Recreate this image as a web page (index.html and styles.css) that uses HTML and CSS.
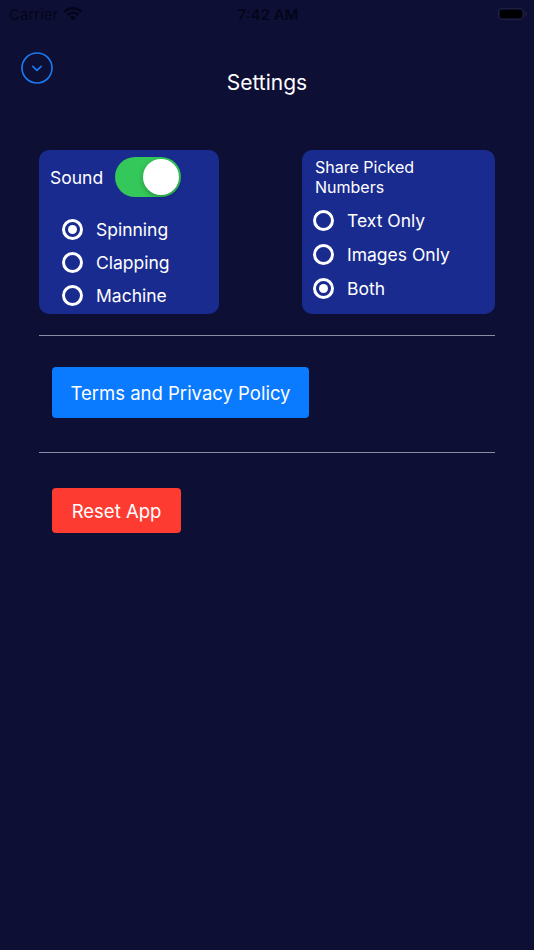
FILE: index.html
```html
<!DOCTYPE html>
<html>
<head>
	<title>Settings</title>
	<link rel="stylesheet" href="styles.css">
</head>
<body>
	<div class="statusBar">
		<div class="carrier">
			<span>Carrier</span>
			<svg class="wifi" width="20" height="14" viewBox="0 0 20 14">
				<path d="M10 13.5 L6.9 10.2 A4.4 4.4 0 0 1 13.1 10.2 Z" fill="#04051a"/>
				<path d="M4.6 7.8 A7.7 7.7 0 0 1 15.4 7.8" stroke="#04051a" stroke-width="2.4" fill="none"/>
				<path d="M1.6 4.8 A11.8 11.8 0 0 1 18.4 4.8" stroke="#04051a" stroke-width="2.4" fill="none"/>
			</svg>
		</div>
		<div class="clock">7:42 AM</div>
		<div class="battery">
			<span class="batteryBody"><span class="batteryFill"></span></span>
			<span class="batteryTip"></span>
		</div>
	</div>

	<div class="header">
		<button class="closeBtn">
			<svg width="32" height="32" viewBox="0 0 32 32">
				<circle cx="16" cy="16" r="15" stroke="#1b7bf2" stroke-width="1.6" fill="none"/>
				<path d="M11.8 14.3 L16 18.3 L20.2 14.3" stroke="#1b7bf2" stroke-width="1.6" fill="none" stroke-linecap="round" stroke-linejoin="round"/>
			</svg>
		</button>
		<h1>Settings</h1>
		<div></div>
	</div>

	<div class="panels">
		<div class="card soundCard">
			<div class="soundRow">
				<span>Sound</span>
				<span class="toggle"><span class="knob"></span></span>
			</div>
			<div class="options">
				<div class="option"><span class="radio checked"></span>Spinning</div>
				<div class="option"><span class="radio"></span>Clapping</div>
				<div class="option"><span class="radio"></span>Machine</div>
			</div>
		</div>

		<div class="card shareCard">
			<div class="cardTitle">Share Picked<br>Numbers</div>
			<div class="options">
				<div class="option"><span class="radio"></span>Text Only</div>
				<div class="option"><span class="radio"></span>Images Only</div>
				<div class="option"><span class="radio checked"></span>Both</div>
			</div>
		</div>
	</div>

	<div class="divider"></div>

	<div class="actions">
		<button class="btn btnBlue">Terms and Privacy Policy</button>
	</div>

	<div class="divider"></div>

	<div class="actions">
		<button class="btn btnRed">Reset App</button>
	</div>
</body>
</html>
```

FILE: styles.css
```css
body {
	margin: 0;
	width: 534px;
	height: 950px;
	background-color: #0e0f35;
	font-family: Inter, "Noto Sans", sans-serif;
	color: #ffffff;
	overflow: hidden;
}

.statusBar {
	height: 28px;
	display: grid;
	grid-template-columns: 1fr auto 1fr;
	align-items: center;
	padding: 0 7px 0 9px;
	color: #04051a;
	font-size: 15px;
}
.carrier {
	display: flex;
	align-items: center;
	gap: 5px;
}
.clock {
	font-weight: 600;
	font-size: 15px;
}
.battery {
	display: flex;
	align-items: center;
	justify-content: flex-end;
}
.batteryBody {
	width: 26px;
	height: 12px;
	border: 1px solid #1d1e3a;
	border-radius: 3px;
	padding: 1px;
	box-sizing: border-box;
	display: flex;
}
.batteryFill {
	flex: 1;
	background-color: #000000;
	border-radius: 2px;
}
.batteryTip {
	width: 2px;
	height: 4px;
	background-color: #1d1e3a;
	margin-left: 1px;
	border-radius: 0 1px 1px 0;
}

.header {
	margin-top: 24px;
	display: grid;
	grid-template-columns: 1fr auto 1fr;
	height: 42px;
	padding-left: 21px;
	padding-right: 21px;
}
.closeBtn {
	width: 32px;
	height: 32px;
	padding: 0;
	border: none;
	background: none;
	align-self: start;
}
.closeBtn svg {
	display: block;
}
.header h1 {
	margin: 0;
	align-self: end;
	font-size: 21px;
	font-weight: 400;
	line-height: 22px;
}

.panels {
	margin-top: 56px;
	padding: 0 39px;
	display: flex;
	justify-content: space-between;
}
.card {
	background-color: #1a2b90;
	border-radius: 10px;
	height: 164px;
	box-sizing: border-box;
}
.soundCard {
	width: 180px;
	padding: 7px 0 0 11px;
}
.shareCard {
	width: 193px;
	padding: 7px 0 0 11px;
}

.soundRow {
	display: flex;
	align-items: center;
	gap: 12px;
	font-size: 17.5px;
}
.toggle {
	width: 66px;
	height: 40px;
	border-radius: 20px;
	background-color: #34c759;
	display: flex;
	align-items: center;
	justify-content: flex-end;
	padding: 2px;
	box-sizing: border-box;
}
.knob {
	width: 36px;
	height: 36px;
	border-radius: 50%;
	background-color: #ffffff;
	box-shadow: 0 2px 5px rgba(0, 0, 0, 0.25);
}

.soundCard .options {
	margin-top: 16px;
	padding-left: 12px;
}
.option {
	height: 33px;
	display: flex;
	align-items: center;
	gap: 13px;
	font-size: 17.5px;
}
.shareCard .option {
	height: 34px;
}

.radio {
	width: 21px;
	height: 21px;
	border: 3px solid #ffffff;
	border-radius: 50%;
	box-sizing: border-box;
	display: flex;
	align-items: center;
	justify-content: center;
}
.radio.checked::after {
	content: "";
	width: 9px;
	height: 9px;
	border-radius: 50%;
	background-color: #ffffff;
}

.cardTitle {
	font-size: 16px;
	line-height: 20px;
	padding-left: 2px;
}
.shareCard .options {
	margin-top: 6px;
}

.divider {
	margin: 21px 39px 0;
	height: 1px;
	background-color: #8c8ca4;
}

.actions {
	padding: 31px 0 0 52px;
}
.btn {
	border: none;
	color: #ffffff;
	font-family: Inter, "Noto Sans", sans-serif;
	font-size: 18.5px;
	border-radius: 4px;
	display: block;
}
.btnBlue {
	width: 257px;
	height: 51px;
	background-color: #0a7afe;
}
.btnRed {
	width: 129px;
	height: 45px;
	background-color: #fe3b30;
	margin-top: 4px;
}
.actions + .divider {
	margin-top: 34px;
}
```
